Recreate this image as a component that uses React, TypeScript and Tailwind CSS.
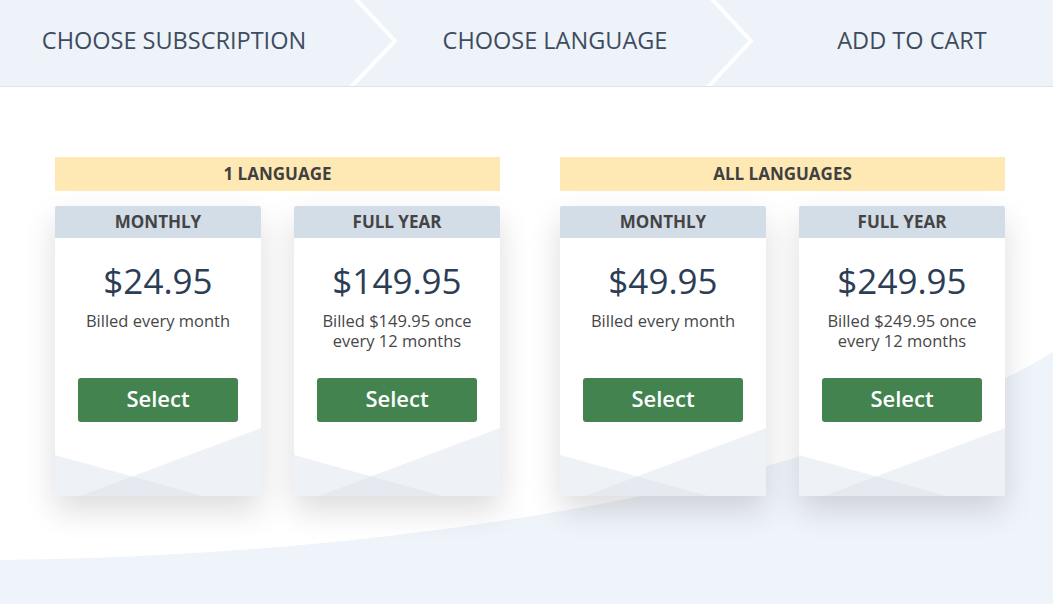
import React from "react";

type Plan = { label: string; price: string; lines: string[] };

const groups: { title: string; plans: Plan[] }[] = [
  {
    title: "1 LANGUAGE",
    plans: [
      { label: "MONTHLY", price: "$24.95", lines: ["Billed every month"] },
      { label: "FULL YEAR", price: "$149.95", lines: ["Billed $149.95 once", "every 12 months"] },
    ],
  },
  {
    title: "ALL LANGUAGES",
    plans: [
      { label: "MONTHLY", price: "$49.95", lines: ["Billed every month"] },
      { label: "FULL YEAR", price: "$249.95", lines: ["Billed $249.95 once", "every 12 months"] },
    ],
  },
];

function Card({ plan }: { plan: Plan }) {
  return (
    <div className="relative flex h-[290px] w-[206px] flex-col overflow-hidden rounded-[2px] bg-white shadow-[0_14px_32px_rgba(0,0,0,0.14)]">
      <div className="flex h-[32px] items-center justify-center bg-[#d3dde8] text-[17px] font-bold text-[#444444]">
        {plan.label}
      </div>
      <div className="mt-[21px] flex h-[44px] items-center justify-center text-[35px] leading-[44px] text-[#2c3e55]">
        {plan.price}
      </div>
      <div className="mt-[8px] h-[40px] text-center text-[16.5px] leading-[20px] text-[#474747]">
        {plan.lines.map((l) => (
          <div key={l}>{l}</div>
        ))}
      </div>
      <div className="relative z-10 mt-[27px] flex justify-center">
        <button className="h-[44px] w-[160px] rounded-[3px] bg-[#43834f] pb-[4px] text-[22px] font-semibold text-white">
          Select
        </button>
      </div>
      <svg
        className="absolute bottom-0 left-0 h-[68px] w-full"
        viewBox="0 0 206 68"
        preserveAspectRatio="none"
      >
        <polygon points="0,27 148,68 0,68" fill="#dfe5ec" opacity="0.53" />
        <polygon points="206,0 206,68 25,68" fill="#dfe5ec" opacity="0.53" />
      </svg>
    </div>
  );
}

export default function App() {
  return (
    <div
      className="relative h-[604px] w-[1053px] overflow-hidden bg-white"
      style={{ fontFamily: '"Open Sans", "Noto Sans", sans-serif' }}
    >
      <svg className="absolute left-0 top-0 h-[604px] w-[1053px]" viewBox="0 0 1053 604">
        <path d="M0 560 C 450 555, 850 475, 1053 352 L1053 604 L0 604 Z" fill="#eff3fa" />
      </svg>

      <div className="relative">
        <div className="relative flex h-[87px] border-b border-[#dde3ea] bg-[#eef3fa] pb-[5px] text-[23.5px] text-[#3e4c5e]">
          <div className="flex w-[348px] items-center justify-center">CHOOSE SUBSCRIPTION</div>
          <div className="flex w-[414px] items-center justify-center">CHOOSE LANGUAGE</div>
          <div className="flex flex-1 items-center justify-center pl-[9px]">ADD TO CART</div>
          <svg className="absolute left-0 top-0 h-[86px] w-[1053px]" viewBox="0 0 1053 86">
            <polyline
              points="355,-2 395,41 350,88"
              fill="none"
              stroke="#ffffff"
              strokeWidth="4"
              strokeLinejoin="round"
            />
            <polyline
              points="711,-2 751,41 707,88"
              fill="none"
              stroke="#ffffff"
              strokeWidth="4"
              strokeLinejoin="round"
            />
          </svg>
        </div>

        <div className="flex gap-[60px] pl-[55px] pt-[70px]">
          {groups.map((g) => (
            <div key={g.title} className="flex w-[445px] flex-col">
              <div className="flex h-[34px] items-center justify-center bg-[#fee9b4] text-[17px] font-bold text-[#404040]">
                {g.title}
              </div>
              <div className="mt-[15px] flex gap-[33px]">
                {g.plans.map((p) => (
                  <Card key={p.label} plan={p} />
                ))}
              </div>
            </div>
          ))}
        </div>
      </div>
    </div>
  );
}
